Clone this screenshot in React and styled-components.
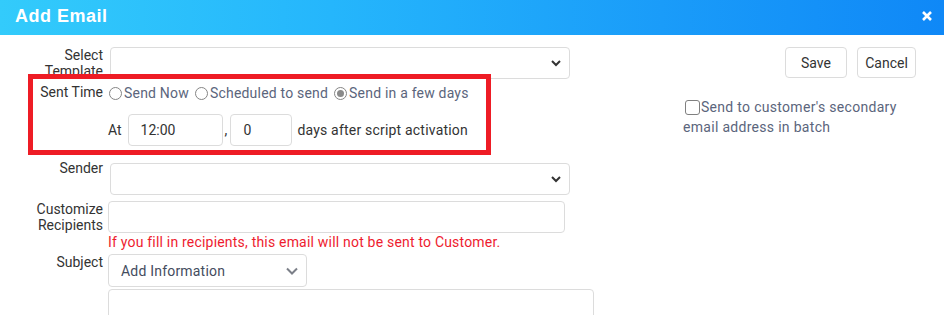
import React from "react";
import styled, { createGlobalStyle } from "styled-components";

const Global = createGlobalStyle`
  html, body { margin: 0; padding: 0; background: #fff; }
  body { font-family: Roboto, "Liberation Sans", Arial, sans-serif; font-size: 14px; color: #333; }
  * { box-sizing: border-box; }
`;

const Header = styled.div`
  height: 35px;
  background: linear-gradient(90deg, #33cbfb 0%, #25b6fc 35%, #1a9cf9 70%, #0f88f7 100%);
  display: flex;
  align-items: center;
  justify-content: space-between;
  padding: 0 11px 0 15px;
`;

const Title = styled.div`
  font-family: "Liberation Sans", Arial, sans-serif;
  font-weight: bold;
  font-size: 18px;
  color: #fff;
  letter-spacing: 0.5px;
  margin-top: -3px;
`;

const Close = styled.button`
  border: 0;
  background: none;
  padding: 0;
  width: 12px;
  height: 12px;
  display: flex;
  margin-top: -4px;
`;

const Body = styled.div`
  display: flex;
  padding-top: 12px;
`;

const Form = styled.div`
  width: 610px;
  display: flex;
  flex-direction: column;
`;

const Row = styled.div`
  display: flex;
  align-items: flex-start;
  margin-top: ${(p) => p.$mt || 0}px;
`;

const Label = styled.div`
  width: 104px;
  flex: none;
  text-align: right;
  line-height: 16px;
  color: #333;
  margin-top: ${(p) => p.$pt || 0}px;
  padding-right: 1px;
`;

const Field = styled.div`
  margin-left: ${(p) => p.$ml || 4}px;
  display: flex;
  flex-direction: column;
`;

const SelectBox = styled.div`
  width: ${(p) => p.$w}px;
  height: ${(p) => p.$h || 32}px;
  border: 1px solid #dcdcdc;
  border-radius: 4px;
  background: #fff;
  display: flex;
  align-items: center;
  justify-content: space-between;
  padding: 0 7px 0 12px;
  color: #444c5e;
  font-size: 14px;
  letter-spacing: 0.2px;
`;

const TextBox = styled.div`
  width: ${(p) => p.$w}px;
  height: ${(p) => p.$h || 32}px;
  margin-top: ${(p) => p.$mt || 0}px;
  border: 1px solid #dcdcdc;
  border-radius: 4px;
  background: #fff;
`;

const SentSection = styled.div`
  position: relative;
  display: flex;
  flex-direction: column;
`;

const Annotation = styled.div`
  position: absolute;
  left: 28px;
  top: -5px;
  width: 463px;
  height: 81px;
  border: 5px solid #ee1c25;
  pointer-events: none;
`;

const RadioRow = styled.div`
  display: flex;
  align-items: center;
  margin-left: 5px;
  height: 18px;
`;

const RadioItem = styled.label`
  display: flex;
  align-items: center;
  color: #5b657c;
  letter-spacing: 0.2px;
  margin-right: 6px;
`;

const RadioDot = styled.span`
  width: 13px;
  height: 13px;
  border-radius: 50%;
  border: 1px solid #858585;
  margin-right: 2px;
  display: flex;
  align-items: center;
  justify-content: center;
  &::after {
    content: "";
    width: 7px;
    height: 7px;
    border-radius: 50%;
    background: ${(p) => (p.$on ? "#8a8a8a" : "transparent")};
  }
`;

const AtRow = styled.div`
  display: flex;
  align-items: center;
  margin-top: 12px;
  padding-left: 108px;
`;

const InlineText = styled.span`
  color: #333;
  margin: 0 ${(p) => p.$mr || 0}px 0 ${(p) => p.$ml || 0}px;
  letter-spacing: ${(p) => p.$ls || 0}px;
`;

const SmallInput = styled.div`
  width: ${(p) => p.$w}px;
  height: 32px;
  border: 1px solid #dcdcdc;
  border-radius: 4px;
  display: flex;
  align-items: center;
  padding-left: 12px;
  font-size: 14px;
  color: #333;
`;

const ErrorText = styled.div`
  color: #ee1c2f;
  line-height: 16px;
  letter-spacing: 0.2px;
  margin-top: 1px;
`;

const Side = styled.div`
  flex: 1;
  display: flex;
  flex-direction: column;
  padding-left: 73px;
  padding-right: 28px;
`;

const Buttons = styled.div`
  display: flex;
  justify-content: flex-end;
  gap: 10px;
`;

const Button = styled.button`
  width: ${(p) => p.$w}px;
  height: 31px;
  border: 1px solid #dcdcdc;
  border-radius: 4px;
  background: #fff;
  font-family: Roboto, "Liberation Sans", Arial, sans-serif;
  font-size: 14px;
  color: #333;
  padding: 0;
`;

const CheckLine = styled.div`
  margin-top: 19px;
  color: #5b657c;
  letter-spacing: 0.3px;
  line-height: 20px;
  width: 230px;
`;

const Box = styled.span`
  display: inline-block;
  width: 15px;
  height: 15px;
  border: 1px solid #808080;
  border-radius: 3px;
  vertical-align: -3px;
  margin-left: 2px;
  margin-right: 1px;
`;

const Chevron = ({ light }) =>
  light ? (
    <svg width="14" height="10" viewBox="0 0 14 10">
      <path d="M2 2.5 L7 7.5 L12 2.5" fill="none" stroke="#7b7f88" strokeWidth="2" />
    </svg>
  ) : (
    <svg width="12" height="8" viewBox="0 0 12 8">
      <path d="M2 2 L6 6 L10 2" fill="none" stroke="#333" strokeWidth="2" />
    </svg>
  );

export default function App() {
  return (
    <>
      <Global />
      <Header>
        <Title>Add Email</Title>
        <Close aria-label="close">
          <svg width="12" height="12" viewBox="0 0 12 12">
            <path d="M2 2 L10 10 M10 2 L2 10" stroke="#fff" strokeWidth="2.6" />
          </svg>
        </Close>
      </Header>
      <Body>
        <Form>
          <Row>
            <Label $pt={0}>Select<br />Template</Label>
            <Field $ml={6}>
              <SelectBox $w={460} $h={32}><span /><Chevron /></SelectBox>
            </Field>
          </Row>
          <SentSection>
            <Row $mt={5}>
              <Label>Sent Time</Label>
              <RadioRow>
                <RadioItem><RadioDot />Send Now</RadioItem>
                <RadioItem><RadioDot />Scheduled to send</RadioItem>
                <RadioItem><RadioDot $on />Send in a few days</RadioItem>
              </RadioRow>
            </Row>
            <AtRow>
              <InlineText $mr={6}>At</InlineText>
              <SmallInput $w={95}>12:00</SmallInput>
              <InlineText $ml={2} $mr={3}>,</InlineText>
              <SmallInput $w={62}>0</SmallInput>
              <InlineText $ml={5} $ls={0.2}>days after script activation</InlineText>
            </AtRow>
            <Annotation />
          </SentSection>
          <Row $mt={17}>
            <Label $pt={-3}>Sender</Label>
            <Field $ml={6}>
              <SelectBox $w={460} $h={32}><span /><Chevron /></SelectBox>
            </Field>
          </Row>
          <Row $mt={6}>
            <Label $pt={0}>Customize<br />Recipients</Label>
            <Field>
              <TextBox $w={457} $h={32} />
              <ErrorText>If you fill in recipients, this email will not be sent to Customer.</ErrorText>
            </Field>
          </Row>
          <Row $mt={4}>
            <Label>Subject</Label>
            <Field>
              <SelectBox $w={199} $h={33}>Add Information<Chevron light /></SelectBox>
              <TextBox $w={486} $h={40} $mt={2} />
            </Field>
          </Row>
        </Form>
        <Side>
          <Buttons>
            <Button $w={62}>Save</Button>
            <Button $w={59}>Cancel</Button>
          </Buttons>
          <CheckLine>
            <Box />Send to customer's secondary email address in batch
          </CheckLine>
        </Side>
      </Body>
    </>
  );
}
